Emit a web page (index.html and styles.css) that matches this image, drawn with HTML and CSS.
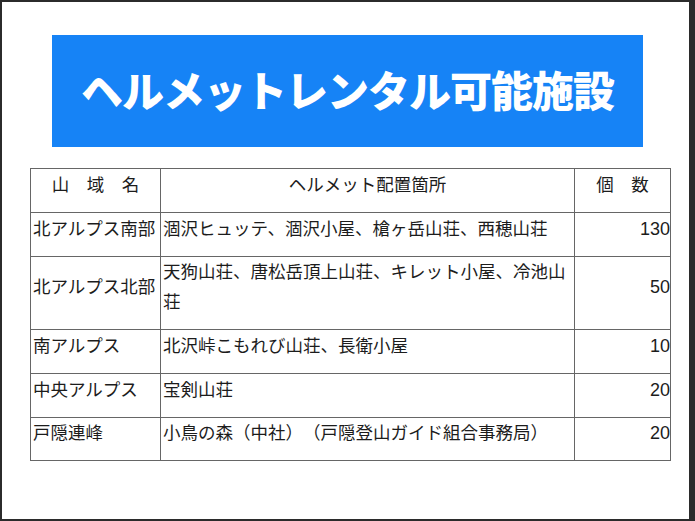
FILE: index.html
```html
<!DOCTYPE html>
<html lang="ja">
<head>
<meta charset="utf-8">
<link rel="stylesheet" href="styles.css">
</head>
<body>
<div class="page">
  <div class="banner"><h1 class="title">ヘルメットレンタル可能施設</h1></div>
  <table class="sheet">
    <colgroup><col class="c1"><col class="c2"><col class="c3"></colgroup>
    <tr class="row head">
      <th>山　域　名</th>
      <th>ヘルメット配置箇所</th>
      <th>個　数</th>
    </tr>
    <tr class="row">
      <td>北アルプス南部</td>
      <td>涸沢ヒュッテ、涸沢小屋、槍ヶ岳山荘、西穂山荘</td>
      <td class="num">130</td>
    </tr>
    <tr class="row tall">
      <td>北アルプス北部</td>
      <td>天狗山荘、唐松岳頂上山荘、キレット小屋、冷池山荘</td>
      <td class="num">50</td>
    </tr>
    <tr class="row">
      <td>南アルプス</td>
      <td>北沢峠こもれび山荘、長衛小屋</td>
      <td class="num">10</td>
    </tr>
    <tr class="row">
      <td>中央アルプス</td>
      <td>宝剣山荘</td>
      <td class="num">20</td>
    </tr>
    <tr class="row last">
      <td>戸隠連峰</td>
      <td>小鳥の森（中社）（戸隠登山ガイド組合事務局）</td>
      <td class="num">20</td>
    </tr>
  </table>
</div>
</body>
</html>
```
FILE: styles.css
```css
html, body {
  margin: 0;
  padding: 0;
  background: #2b2b2b;
}
.page {
  box-sizing: border-box;
  width: 687px;
  height: 517px;
  margin: 2px 0 0 2px;
  background: #ffffff;
  padding: 33px 0 0 28px;
  display: flex;
  flex-direction: column;
  align-items: flex-start;
}
.banner {
  margin-left: 22px;
  width: 591px;
  height: 112px;
  background: #1683f6;
  display: flex;
  align-items: center;
  justify-content: center;
}
.title {
  margin: 0;
  padding-bottom: 4px;
  color: #ffffff;
  font-family: "Noto Sans CJK JP", sans-serif;
  font-weight: 900;
  font-size: 42px;
  letter-spacing: -1px;
  line-height: 1;
  white-space: nowrap;
}
.sheet {
  margin-top: 21px;
  width: 640px;
  table-layout: fixed;
  border-collapse: collapse;
  font-family: "Liberation Sans", "Noto Sans CJK JP", sans-serif;
  font-size: 17.5px;
  color: #1c1c1c;
  text-spacing-trim: space-all;
}
.c1 { width: 130px; }
.c2 { width: 414px; }
.c3 { width: 96px; }
.sheet th,
.sheet td {
  border: 1px solid #666666;
  padding: 0 2px 12px 2px;
  line-height: 30px;
  vertical-align: middle;
  font-weight: 400;
  text-align: left;
}
.sheet th { text-align: center; }
.row { height: 44px; }
.row.tall { height: 72px; }
.row.last { height: 43px; }
.sheet td.num {
  text-align: right;
  padding-right: 0;
  font-size: 18px;
}
```
